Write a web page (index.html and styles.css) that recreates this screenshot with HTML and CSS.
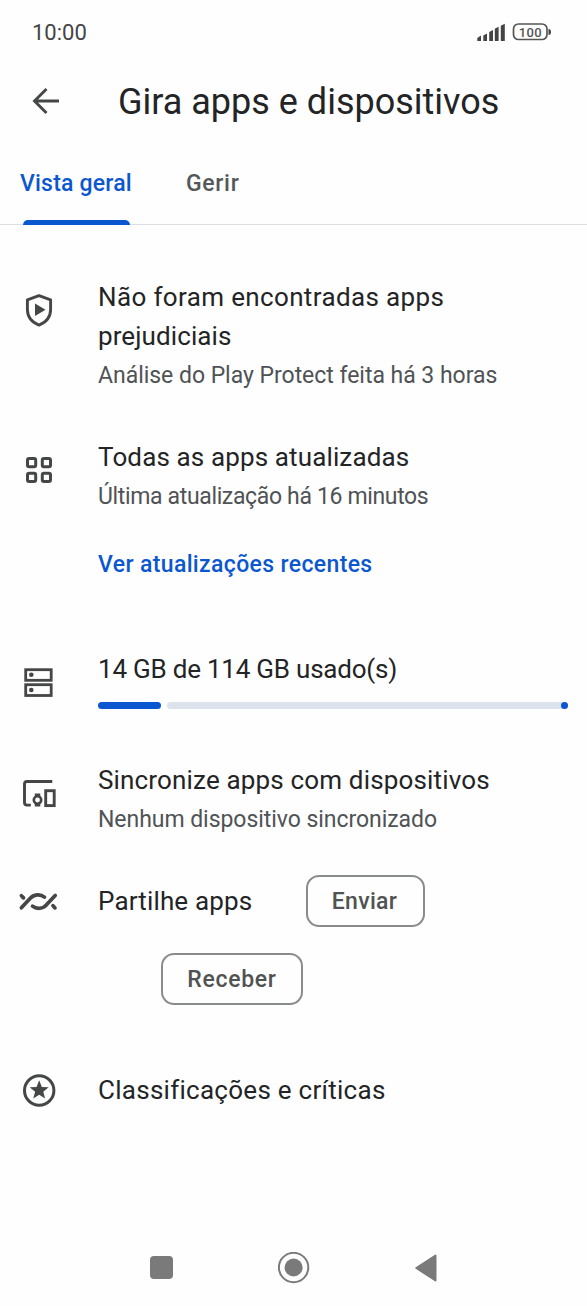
FILE: index.html
```html
<!DOCTYPE html>
<html lang="pt">
<head>
<meta charset="utf-8">
<title>Gira apps e dispositivos</title>
<link rel="stylesheet" href="styles.css">
</head>
<body>
<header class="status">
  <span class="time">10:00</span>
  <svg class="status-icons" width="76" height="22" viewBox="0 0 76 22">
    <g fill="#444"><path d="M1.300 20v-3l3.700-2.500v5.500zM7.300 20v-5.500l3.700-2v7.500zM13.200 20v-9l3.800-2v11zM18.800 20v-12.300l3.800-2v14.300zM24.800 20v-15.300l4-2v17.300z"/><path d="M72.500 8q2.500 0 2.500 3t-2.500 3z"/></g>
    <rect x="37.500" y="3" width="33.500" height="15.500" rx="5" fill="none" stroke="#555" stroke-width="1.700"/>
    <text x="54.200" y="15.700" text-anchor="middle" class="battery" textLength="23">100</text>
  </svg>
</header>
<div class="appbar">
  <svg width="28" height="28" viewBox="0 0 28 28" fill="none" stroke="#444746" stroke-width="2.900"><path d="M27 14H3M14.500 2L2.500 14l12 12"/></svg>
  <h1 class="heading">Gira apps e dispositivos</h1>
</div>
<nav class="tabs">
  <a class="tab active">Vista geral</a>
  <a class="tab manage">Gerir</a>
</nav>
<main class="list">
  <section class="row protect">
    <svg class="icon" width="60" height="60" viewBox="0 0 60 60"><path d="M39 17.700l11.600 4.100v9.700c0 7.400-4.800 12.900-11.600 15.600-6.800-2.700-11.600-8.200-11.600-15.600v-9.700z" fill="none" stroke="#444746" stroke-width="2.900" stroke-linejoin="round"/><path d="M35 25.500l10.500 6.200-10.500 6.200z" fill="#444746"/></svg>
    <div class="content"><p class="title"><span class="found">Não foram encontradas apps</span><br><span class="harmful">prejudiciais</span></p><p class="sub">Análise do Play Protect feita há 3 horas</p></div>
  </section>
  <section class="row updates">
    <svg class="icon" width="60" height="60" viewBox="0 0 60 60" fill="none" stroke="#444746" stroke-width="3"><rect x="27.500" y="20.500" width="8.200" height="8.200" rx="1.700"/><rect x="42.300" y="20.500" width="8.200" height="8.200" rx="1.700"/><rect x="27.500" y="35.300" width="8.200" height="8.200" rx="1.700"/><rect x="42.300" y="35.300" width="8.200" height="8.200" rx="1.700"/></svg>
    <div class="content"><p class="title">Todas as apps atualizadas</p><p class="sub">Última atualização há 16 minutos</p><a class="link">Ver atualizações recentes</a></div>
  </section>
  <section class="row storage">
    <svg class="icon" width="60" height="60" viewBox="0 0 60 60"><g fill="none" stroke="#444746" stroke-width="2.800"><rect x="25.700" y="19.700" width="25.500" height="10.600"/><rect x="25.700" y="34.700" width="25.500" height="10.800"/></g><circle cx="31.300" cy="24.800" r="2.300" fill="#444746"/><circle cx="31.300" cy="40" r="2.300" fill="#444746"/></svg>
    <div class="content"><p class="title">14 GB de 114 GB usado(s)</p><div class="meter"><i class="used"></i><i class="free"><i class="dot"></i></i></div></div>
  </section>
  <section class="row sync">
    <svg class="icon" width="60" height="60" viewBox="0 0 60 60" fill="none" stroke="#444746" stroke-width="2.900"><path d="M52.300 20.500H27q-2.500 0-2.500 2.500v18.500q0 2.600 2.500 2.600h3.800"/><rect x="45.700" y="29.700" width="8.500" height="14.900"/><circle cx="37.500" cy="39" r="3.700" stroke-width="2.600"/><path d="M34.800 36v-3.600h5.500V36q-2.700-1.500-5.500 0zM34.800 42v3.500h5.500V42q-2.700 1.500-5.500 0z" fill="#444746" stroke="none"/></svg>
    <div class="content"><p class="title">Sincronize apps com dispositivos</p><p class="sub">Nenhum dispositivo sincronizado</p></div>
  </section>
  <section class="row share">
    <svg class="icon" width="60" height="60" viewBox="0 0 60 60" fill="none" stroke="#444746" stroke-width="3.700" stroke-linecap="round"><path d="M21.400 38.800l8.600-9.300c3.800-4.200 10.200-4.800 14.500-1.400M32.500 37.100c4.300 3.400 10.500 2.800 14.200-1.500l8.500-9.200"/><path d="M21.400 26.700l2.100 2.200M53 36.700l2 2.200"/></svg>
    <div class="content share-line"><p class="title">Partilhe apps</p><button class="btn send">Enviar</button></div>
  </section>
  <div class="receive-line"><button class="btn receive">Receber</button></div>
  <section class="row reviews">
    <svg class="icon" width="60" height="60" viewBox="0 0 60 60"><circle cx="39.200" cy="31.500" r="14.700" fill="none" stroke="#444746" stroke-width="3"/><path d="M39.200 21.300l2.600 6.600 6.900.4-5.400 4.400 1.800 6.800-5.900-3.800-5.900 3.800 1.800-6.800-5.400-4.400 6.900-.4z" fill="#444746"/></svg>
    <div class="content"><p class="title">Classificações e críticas</p></div>
  </section>
</main>
<footer class="navbar">
  <svg width="23" height="23" viewBox="0 0 23 23"><rect width="23" height="23" rx="4" fill="#7a7a7a"/></svg>
  <svg width="32" height="32" viewBox="0 0 32 32"><circle cx="15.600" cy="15.500" r="14.700" fill="none" stroke="#7a7a7a" stroke-width="2"/><circle cx="15.600" cy="15.500" r="9" fill="#7a7a7a"/></svg>
  <svg width="22" height="28" viewBox="0 0 22 28"><path d="M20.500 1.500v25L1.300 14z" fill="#7a7a7a" stroke="#7a7a7a" stroke-width="2" stroke-linejoin="round"/></svg>
</footer>
</body>
</html>
```
FILE: styles.css
```css
* { box-sizing: border-box; }
body { margin: 0; width: 587px; height: 1306px; overflow: hidden; background: #fefefe; color: #232425; font-family: Roboto, "Noto Sans", sans-serif; display: flex; flex-direction: column; }
p, h1 { margin: 0; font-weight: 400; }

.status { height: 64px; padding: 18px 35px 0 32px; display: flex; justify-content: space-between; align-items: flex-start; }
.time { font-size: 22px; line-height: 29px; color: #444; }
.status-icons { margin-top: 3px; }
.battery { font-size: 13px; font-weight: 500; fill: #555; }

.appbar { height: 76px; padding: 0 32px; display: flex; align-items: center; gap: 58px; }
.appbar svg { margin-top: -2px; }
.heading { font-size: 36px; line-height: 50px; white-space: nowrap; }

.tabs { height: 85px; display: flex; gap: 54px; padding-left: 20px; border-bottom: 1px solid #dcdee1; color: #555859; font-size: 23px; font-weight: 500; }
.tab { padding-top: 29px; line-height: 30px; letter-spacing: 0.2px; }
.tab.manage { letter-spacing: 0.7px; }
.tab.active { position: relative; color: #0b57d0; }
.tab.active::after { content: ""; position: absolute; left: 3px; right: 2px; bottom: -1px; height: 5px; border-radius: 5px 5px 0 0; background: #0b57d0; }

.list { padding-top: 53px; }
.row { display: flex; }
.icon { width: 60px; height: 60px; flex: none; }
.content { margin-left: 38px; flex: 1; white-space: nowrap; }
.title { font-size: 26px; line-height: 39px; }
.sub { padding-top: 1px; font-size: 23px; line-height: 38px; color: #505355; }
.link { display: block; margin-top: 30px; font-size: 23px; line-height: 38px; font-weight: 500; letter-spacing: 0.36px; color: #0b57d0; }

.protect { height: 160px; }
.found { letter-spacing: 0.36px; }
.harmful { letter-spacing: 0.1px; }
.protect .sub { letter-spacing: -0.03px; }
.updates { height: 212px; }
.updates .title { letter-spacing: 0.13px; }
.updates .sub { letter-spacing: -0.35px; }
.storage { height: 111px; }
.storage .title { letter-spacing: -0.22px; }
.sync { height: 114px; }
.sync .title { letter-spacing: 0.16px; }
.sync .sub { letter-spacing: -0.05px; }

.meter { display: flex; gap: 6px; margin-top: 13px; padding-right: 19px; }
.used, .free { height: 7px; border-radius: 4px; }
.used { width: 63px; background: #0b57d0; }
.free { flex: 1; display: flex; justify-content: flex-end; background: #dde3ec; }
.dot { width: 7px; height: 7px; border-radius: 50%; background: #0b57d0; }

.share { height: 52px; }
.share .icon { margin-top: -6px; }
.share-line { display: flex; align-items: center; }
.share-line .title { width: 208px; letter-spacing: 0.15px; }
.btn { height: 52px; font: 500 23px/46px Roboto, sans-serif; border: 2px solid #8a8c8b; border-radius: 13px; background: none; color: #505352; padding: 2px 0 0; }
.send { width: 119px; letter-spacing: 0.3px; padding-right: 2px; }
.receive { width: 142px; letter-spacing: 0.7px; }
.receive-line { margin: 26px 0 0 161px; height: 118px; }
.reviews .icon { margin-top: -12px; }
.reviews .title { letter-spacing: 0.27px; }

.navbar { height: 77px; margin-top: auto; padding-left: 150px; display: flex; align-items: center; gap: 105px; }
```
